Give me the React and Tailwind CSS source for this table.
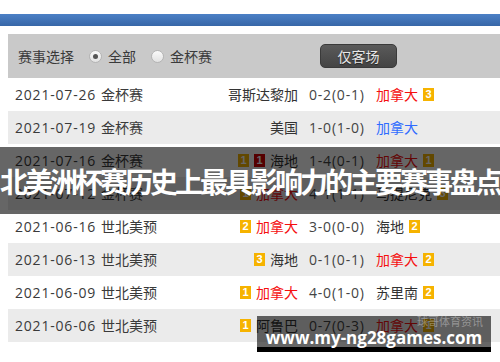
const rows = [
  { date: '2021-07-26', type: '金杯赛', home: '哥斯达黎加', score: '0-2(0-1)', away: '加拿大', awayColor: 'red', awayBadges: ['y3'] },
  { date: '2021-07-19', type: '金杯赛', home: '美国', score: '1-0(1-0)', away: '加拿大', awayColor: 'blue' },
  { date: '2021-07-16', type: '金杯赛', homeBadges: ['y1', 'r1'], home: '海地', score: '1-4(0-1)', away: '加拿大', awayColor: 'red', awayBadges: ['y1'] },
  { date: '2021-07-12', type: '金杯赛', homeBadges: ['y1'], home: '加拿大', homeColor: 'red', score: '4-1(1-1)', away: '马提尼克', awayBadges: ['y3'] },
  { date: '2021-06-16', type: '世北美预', homeBadges: ['y2'], home: '加拿大', homeColor: 'red', score: '3-0(0-0)', away: '海地', awayBadges: ['y2'] },
  { date: '2021-06-13', type: '世北美预', homeBadges: ['y3'], home: '海地', score: '0-1(0-1)', away: '加拿大', awayColor: 'red', awayBadges: ['y2'] },
  { date: '2021-06-09', type: '世北美预', homeBadges: ['y1'], home: '加拿大', homeColor: 'red', score: '4-0(1-0)', away: '苏里南', awayBadges: ['y2'] },
  { date: '2021-06-06', type: '世北美预', homeBadges: ['y1'], home: '阿鲁巴', score: '0-7(0-3)', away: '加拿大', awayColor: 'red', awayBadges: ['y1'] },
];

function Badge({ code }) {
  const red = code[0] === 'r';
  return (
    <span
      className={
        'inline-flex h-[13px] w-[11px] items-center justify-center font-[Liberation_Sans,sans-serif] text-[11px] font-bold leading-none text-white ' +
        (red ? 'bg-[#d40000]' : 'bg-[#f6b300]')
      }
    >
      {code.slice(1)}
    </span>
  );
}

function teamColor(c) {
  if (c === 'red') return 'text-[#f50f0f]';
  if (c === 'blue') return 'text-[#2f6bff]';
  return 'text-[#333]';
}

function Row({ r, i }) {
  return (
    <div className={'ml-2 flex h-[33px] items-center text-[14px] ' + (i % 2 ? 'bg-[#ebebeb]' : 'bg-white')}>
      <div className="flex w-[190px] items-center pl-[7px] text-[#3a3a3a]">
        <span className="tracking-[0.8px]">{r.date}</span>
        <span className="ml-[5px]">{r.type}</span>
      </div>
      <div className="flex w-[100px] items-center justify-end">
        {(r.homeBadges || []).map((b, k) => (
          <span key={k} className="mr-[5px] flex">
            <Badge code={b} />
          </span>
        ))}
        <span className={teamColor(r.homeColor)}>{r.home}</span>
      </div>
      <span className="ml-[11px] w-[56px] tracking-[0.8px] text-[#444]">{r.score}</span>
      <div className="ml-[11px] flex items-center gap-[5px]">
        <span className={teamColor(r.awayColor)}>{r.away}</span>
        {(r.awayBadges || []).map((b, k) => (
          <Badge key={k} code={b} />
        ))}
      </div>
    </div>
  );
}

function Radio({ checked }) {
  return (
    <span className="flex h-[13px] w-[13px] items-center justify-center rounded-full border border-[#b4b4b4] bg-gradient-to-b from-[#fafafa] to-[#e2e2e2]">
      {checked && <span className="h-[5px] w-[5px] rounded-full bg-[#555]" />}
    </span>
  );
}

export default function App() {
  return (
    <div className="relative h-[362px] w-[500px] overflow-hidden bg-white font-[Open_Sans,Noto_Sans_CJK_SC,sans-serif]">
      <div className="h-[14px]" />
      <div className="h-[12px] bg-gradient-to-b from-[#4c80c6] to-[#3767a8]" />
      <div className="h-[8px]" />

      {/* filter bar */}
      <div className="ml-2 flex h-[44px] items-center bg-[#c9c9c9] text-[14px] text-[#3a3a3a]">
        <span className="ml-[10px]">赛事选择</span>
        <span className="ml-[15px] flex items-center gap-[6px]">
          <Radio checked />
          全部
        </span>
        <span className="ml-[15px] flex items-center gap-[6px]">
          <Radio />
          金杯赛
        </span>
        <button className="ml-[108px] flex h-[24px] w-[77px] items-center justify-center rounded-[5px] border border-[#3a3a3a] bg-gradient-to-b from-[#5a5a5a] to-[#444] text-[14px] text-[#e8e8e8] [text-shadow:0_1px_1px_rgba(0,0,0,0.6)]">
          仅客场
        </button>
      </div>

      {rows.map((r, i) => (
        <Row key={i} r={r} i={i} />
      ))}

      {/* title overlay */}
      <div className="absolute left-0 right-0 top-[147px] flex h-[67px] items-center justify-center bg-black/60">
        <span className="whitespace-nowrap font-[Noto_Sans_CJK_SC,sans-serif] text-[28px] font-bold tracking-[-3px] text-white">
          北美洲杯赛历史上最具影响力的主要赛事盘点
        </span>
      </div>

      {/* watermark */}
      <div className="absolute left-[257px] top-[316px] flex w-[234px] flex-col">
        <div className="relative flex h-[31px] items-end justify-center bg-black/60">
          <span className="absolute right-[8px] top-[-1px] text-[11px] leading-[13px] text-white/35">球哥体育资讯</span>
          <span className="whitespace-nowrap font-[Open_Sans,sans-serif] text-[17px] font-bold leading-[19px] text-white">www.my-ng28games.com</span>
        </div>
        <div className="h-[5px] bg-black" />
      </div>
    </div>
  );
}
